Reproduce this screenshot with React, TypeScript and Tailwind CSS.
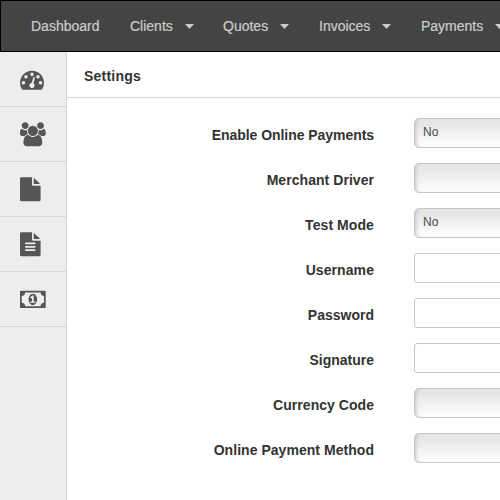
import type { ReactNode } from "react";

const navItems = [
  { label: "Dashboard", box: "w-[99px]", caret: false },
  { label: "Clients", box: "w-[93px]", caret: true },
  { label: "Quotes", box: "w-[96px]", caret: true },
  { label: "Invoices", box: "w-[102px]", caret: true },
  { label: "Payments", box: "w-[120px]", caret: true },
];

const fields = [
  { label: "Enable Online Payments", type: "select", value: "No", spacing: "tracking-[-0.05px]" },
  { label: "Merchant Driver", type: "select", value: "", spacing: "tracking-[0.05px]" },
  { label: "Test Mode", type: "select", value: "No", spacing: "tracking-[0.08px]" },
  { label: "Username", type: "text", value: "", spacing: "tracking-[0.08px]" },
  { label: "Password", type: "text", value: "", spacing: "tracking-normal" },
  { label: "Signature", type: "text", value: "", spacing: "tracking-normal" },
  { label: "Currency Code", type: "select", value: "", spacing: "tracking-[0.04px]" },
  { label: "Online Payment Method", type: "select", value: "", spacing: "tracking-[0.04px]" },
];

const icons = [
  {
    name: "Dashboard",
    box: "0 -30 1792 1792",
    size: "w-6",
    d: "M384 1152q0-53-37.5-90.5t-90.5-37.5-90.5 37.5-37.5 90.5 37.5 90.5 90.5 37.5 90.5-37.5 37.5-90.5zm192-448q0-53-37.5-90.5t-90.5-37.5-90.5 37.5-37.5 90.5 37.5 90.5 90.5 37.5 90.5-37.5 37.5-90.5zm428 481l101-382q6-26-7.5-48.5t-38.5-29.5-48 6.5-30 39.5l-101 382q-60 5-107 43.5t-63 98.5q-20 77 20 146t117 89 146-20 89-117q16-60-6-117t-72-91zm660-33q0-53-37.5-90.5t-90.5-37.5-90.5 37.5-37.5 90.5 37.5 90.5 90.5 37.5 90.5-37.5 37.5-90.5zm-640-640q0-53-37.5-90.5t-90.5-37.5-90.5 37.5-37.5 90.5 37.5 90.5 90.5 37.5 90.5-37.5 37.5-90.5zm448 192q0-53-37.5-90.5t-90.5-37.5-90.5 37.5-37.5 90.5 37.5 90.5 90.5 37.5 90.5-37.5 37.5-90.5zm320 448q0 261-141 483-19 29-54 29h-1402q-35 0-54-29-141-221-141-483 0-182 71-348t191-286 286-191 348-71 348 71 286 191 191 286 71 348z",
  },
  {
    name: "Clients",
    box: "64 -16 1920 1792",
    size: "w-[25.7px]",
    d: "M657 896q-162 5-265 128h-134q-82 0-138-40.5t-56-118.5q0-353 124-353 6 0 43.5 21t97.5 42.5 119 21.5q67 0 133-23-5 37-5 66 0 139 81 256zm1071 637q0 120-73 189.5t-194 69.5h-874q-121 0-194-69.5t-73-189.5q0-53 3.5-103.5t14-109 26.5-108.5 43-97.5 62-81 85.5-53.5 111.5-20q10 0 43 21.5t73 48 107 48 135 21.5 135-21.5 107-48 73-48 43-21.5q61 0 111.5 20t85.5 53.5 62 81 43 97.5 26.5 108.5 14 109 3.5 103.5zm-1024-1277q0 106-75 181t-181 75-181-75-75-181 75-181 181-75 181 75 75 181zm704 384q0 159-112.5 271.5t-271.5 112.5-271.5-112.5-112.5-271.5 112.5-271.5 271.5-112.5 271.5 112.5 112.5 271.5zm576 225q0 78-56 118.5t-138 40.5h-134q-103-123-265-128 81-117 81-256 0-29-5-66 66 23 133 23 59 0 119-21.5t97.5-42.5 43.5-21q124 0 124 353zm-128-609q0 106-75 181t-181 75-181-75-75-181 75-181 181-75 181 75 75 181z",
  },
  {
    name: "Quotes",
    box: "128 -16 1536 1792",
    size: "w-[20.6px]",
    d: "M1152 512v-472q22 14 36 28l408 408q14 14 28 36h-472zm-128 32q0 40 28 68t68 28h544v1056q0 40-28 68t-68 28h-1344q-40 0-68-28t-28-68v-1600q0-40 28-68t68-28h800v544z",
  },
  {
    name: "Invoices",
    box: "128 -16 1536 1792",
    size: "w-[20.6px]",
    d: "M1596 476q14 14 28 36h-472v-472q22 14 36 28zm-476 164h544v1056q0 40-28 68t-68 28h-1344q-40 0-68-28t-28-68v-1600q0-40 28-68t68-28h800v544q0 40 28 68t68 28zm160 736v-64q0-14-9-23t-23-9h-704q-14 0-23 9t-9 23v64q0 14 9 23t23 9h704q14 0 23-9t9-23zm0-256v-64q0-14-9-23t-23-9h-704q-14 0-23 9t-9 23v64q0 14 9 23t23 9h704q14 0 23-9t9-23zm0-256v-64q0-14-9-23t-23-9h-704q-14 0-23 9t-9 23v64q0 14 9 23t23 9h704q14 0 23-9t9-23z",
  },
  {
    name: "Payments",
    box: "0 -30 1920 1792",
    size: "w-[25.7px]",
    d: "M768 1152h384v-96h-128v-448h-114l-148 137 77 80q42-37 55-57h2v288h-128v96zm512-256q0 70-21 142t-59.5 134-101.5 101-138 39-138-39-101.5-101-59.5-134-21-142 21-142 59.5-134 101.5-101 138-39 138 39 101.5 101 59.5 134 21 142zm512 256v-512q-106 0-181-75t-75-181h-1152q0 106-75 181t-181 75v512q106 0 181 75t75 181h1152q0-106 75-181t181-75zm128-832v1152q0 26-19 45t-45 19h-1792q-26 0-45-19t-19-45v-1152q0-26 19-45t45-19h1792q26 0 45 19t19 45z",
  },
];

function Caret() {
  return (
    <svg className="mt-px h-[5px] w-[9px] fill-[#cccccc]" viewBox="0 0 9 5">
      <path d="M0 0h9L4.5 5z" />
    </svg>
  );
}

function Field({ label, spacing, children }: { label: string; spacing: string; children: ReactNode }) {
  return (
    <div className="flex h-[30px] items-center">
      <label
        className={`w-[307px] shrink-0 pt-1 text-right text-sm leading-5 font-bold whitespace-nowrap text-[#333333] ${spacing}`}
      >
        {label}
      </label>
      <div className="ml-10 w-[220px] shrink-0">{children}</div>
    </div>
  );
}

export default function App() {
  return (
    <div className="flex h-[500px] w-[500px] flex-col overflow-hidden bg-white font-['Liberation_Sans',Arial,sans-serif]">
      <nav className="flex h-[52px] shrink-0 items-center overflow-hidden border-y border-l border-black bg-[#444444] pl-[30px] text-sm text-[#cccccc] [-webkit-text-stroke:0.2px_#cccccc]">
        {navItems.map((item) => (
          <a key={item.label} className={`flex shrink-0 items-center gap-3 ${item.box}`}>
            <span>{item.label}</span>
            {item.caret && <Caret />}
          </a>
        ))}
      </nav>
      <div className="flex min-h-0 flex-1">
        <aside className="w-[67px] shrink-0 border-r border-[#d6d6d6] bg-[#ededed]">
          {icons.map((icon) => (
            <a key={icon.name} className="flex h-[55px] border-b border-[#d8d8d8] pt-[15px] pl-5">
              <svg
                className={`h-6 shrink-0 overflow-visible fill-[#555555] ${icon.size}`}
                viewBox={icon.box}
                aria-label={icon.name}
              >
                <path d={icon.d} />
              </svg>
            </a>
          ))}
        </aside>
        <main className="min-w-0 flex-1 overflow-hidden">
          <header className="flex h-[46px] items-center border-b border-[#d6d6d6] pt-0.5 pl-[17px]">
            <h1 className="text-sm font-bold tracking-[0.22px] text-[#333333]">Settings</h1>
          </header>
          <form className="flex flex-col gap-[15px] pt-5">
            {fields.map((field) => (
              <Field key={field.label} label={field.label} spacing={field.spacing}>
                {field.type === "select" ? (
                  <div className="flex h-[30px] items-center rounded-[5px] border border-[#c6c6c6] bg-linear-to-b from-[#e6e6e6] from-15% to-white pb-0.5 pl-2 text-xs text-[#555555] shadow-[inset_4px_0_4px_-3px_#c4c4c4] [-webkit-text-stroke:0.15px_#555555]">
                    {field.value}
                  </div>
                ) : (
                  <div className="h-[30px] rounded-[3px] border border-[#c8c8c8] bg-white" />
                )}
              </Field>
            ))}
          </form>
        </main>
      </div>
    </div>
  );
}
